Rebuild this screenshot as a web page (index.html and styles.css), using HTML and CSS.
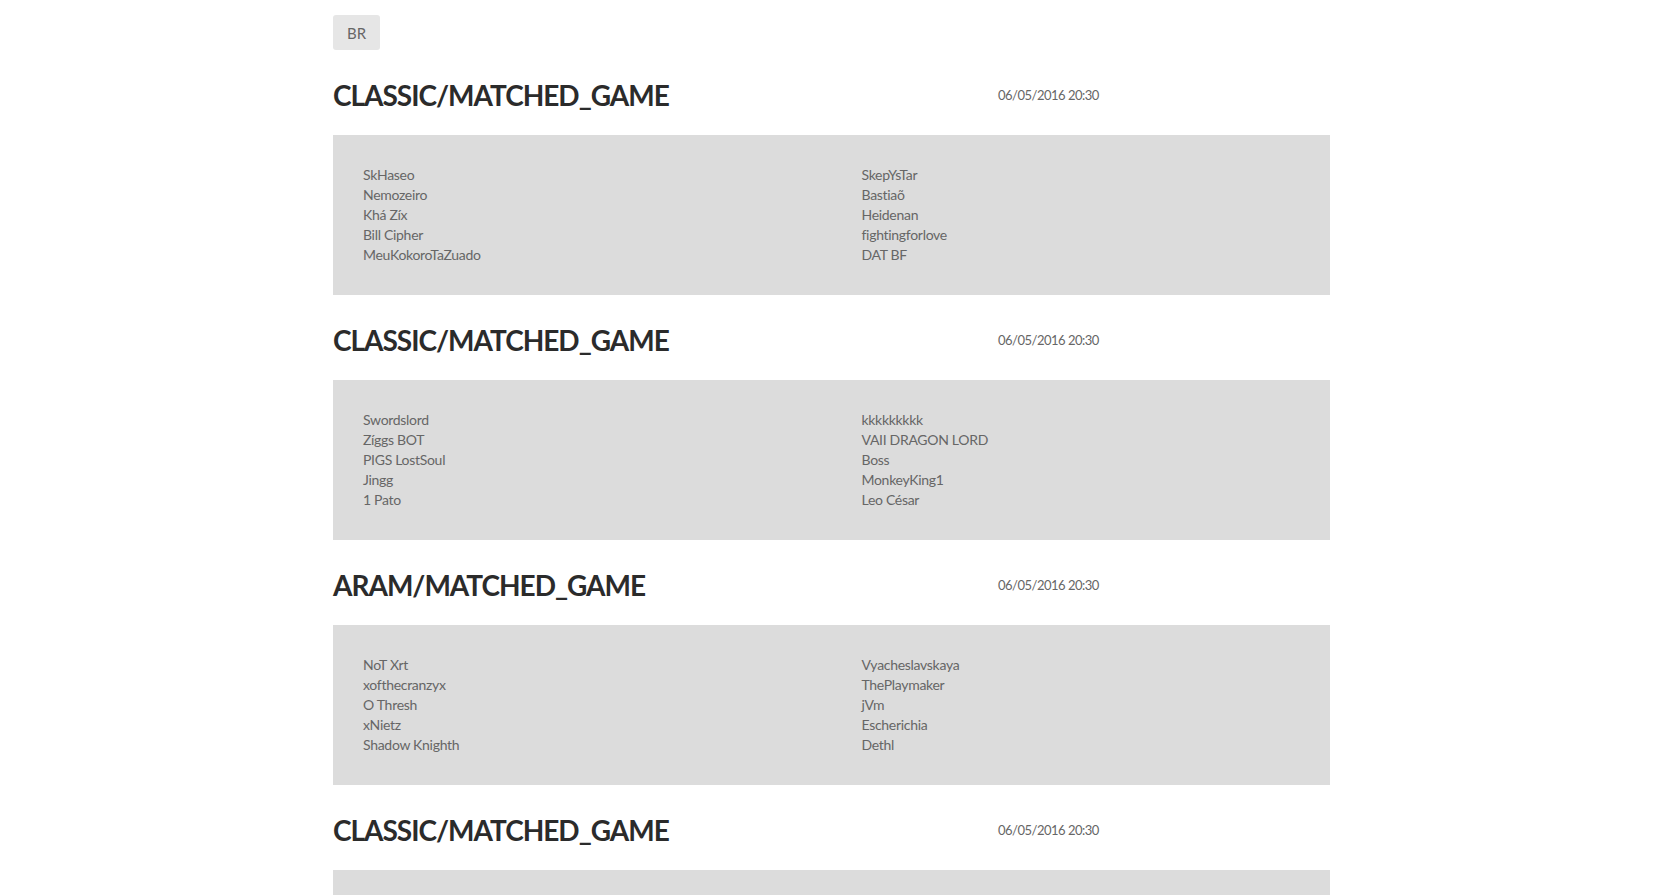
FILE: index.html
```html
<!DOCTYPE html>
<html lang="pt-BR">
<head>
<meta charset="utf-8">
<title>Partidas</title>
<link rel="stylesheet" href="styles.css">
</head>
<body>
<div class="container">
  <div class="region">BR</div>

  <section class="match">
    <div class="match-head">
      <h2 class="match-title">CLASSIC/MATCHED_GAME</h2>
      <div class="match-date">06/05/2016 20:30</div>
    </div>
    <div class="teams">
      <ul class="team">
        <li>SkHaseo</li>
        <li>Nemozeiro</li>
        <li>Khá Zíx</li>
        <li>Bill Cipher</li>
        <li>MeuKokoroTaZuado</li>
      </ul>
      <ul class="team">
        <li>SkepYsTar</li>
        <li>Bastiaõ</li>
        <li>Heidenan</li>
        <li>fightingforlove</li>
        <li>DAT BF</li>
      </ul>
    </div>
  </section>

  <section class="match">
    <div class="match-head">
      <h2 class="match-title">CLASSIC/MATCHED_GAME</h2>
      <div class="match-date">06/05/2016 20:30</div>
    </div>
    <div class="teams">
      <ul class="team">
        <li>Swordslord</li>
        <li>Zíggs BOT</li>
        <li>PIGS LostSoul</li>
        <li>Jingg</li>
        <li>1 Pato</li>
      </ul>
      <ul class="team">
        <li>kkkkkkkkk</li>
        <li>VAII DRAGON LORD</li>
        <li>Boss</li>
        <li>MonkeyKing1</li>
        <li>Leo César</li>
      </ul>
    </div>
  </section>

  <section class="match">
    <div class="match-head">
      <h2 class="match-title">ARAM/MATCHED_GAME</h2>
      <div class="match-date">06/05/2016 20:30</div>
    </div>
    <div class="teams">
      <ul class="team">
        <li>NoT Xrt</li>
        <li>xofthecranzyx</li>
        <li>O Thresh</li>
        <li>xNietz</li>
        <li>Shadow Knighth</li>
      </ul>
      <ul class="team">
        <li>Vyacheslavskaya</li>
        <li>ThePlaymaker</li>
        <li>jVm</li>
        <li>Escherichia</li>
        <li>Dethl</li>
      </ul>
    </div>
  </section>

  <section class="match">
    <div class="match-head">
      <h2 class="match-title">CLASSIC/MATCHED_GAME</h2>
      <div class="match-date">06/05/2016 20:30</div>
    </div>
    <div class="teams">
      <ul class="team">
        <li>Player One</li>
        <li>Player Two</li>
        <li>Player Three</li>
        <li>Player Four</li>
        <li>Player Five</li>
      </ul>
      <ul class="team">
        <li>Player Six</li>
        <li>Player Seven</li>
        <li>Player Eight</li>
        <li>Player Nine</li>
        <li>Player Ten</li>
      </ul>
    </div>
  </section>
</div>
</body>
</html>
```

FILE: styles.css
```css
html, body {
  margin: 0;
  padding: 0;
  background: #ffffff;
}

body {
  font-family: Lato, "Liberation Sans", sans-serif;
  color: #333333;
}

.container {
  width: 997px;
  margin: 0 auto;
}

.region {
  display: inline-flex;
  align-items: center;
  justify-content: center;
  margin-top: 15px;
  width: 47px;
  height: 35px;
  background: #e6e6e6;
  border-radius: 3px;
  font-size: 15px;
  font-weight: 400;
  color: #666666;
}

.match-head {
  display: grid;
  grid-template-columns: 665px 1fr;
  align-items: center;
  box-sizing: border-box;
  height: 85px;
  padding-top: 4px;
}

.match-title {
  margin: 0;
  font-size: 28px;
  font-weight: 700;
  line-height: 36px;
  color: #2b2b2b;
  letter-spacing: -1px;
}

.match-date {
  font-size: 13px;
  font-weight: 400;
  color: #666666;
  letter-spacing: -0.5px;
}

.teams {
  display: grid;
  grid-template-columns: 1fr 1fr;
  background: #dcdcdc;
  padding: 30px 0;
}

.team {
  list-style: none;
  margin: 0;
  padding: 0 0 0 30px;
  font-size: 14px;
  font-weight: 400;
  line-height: 20px;
  color: #666666;
  letter-spacing: -0.3px;
}
```
